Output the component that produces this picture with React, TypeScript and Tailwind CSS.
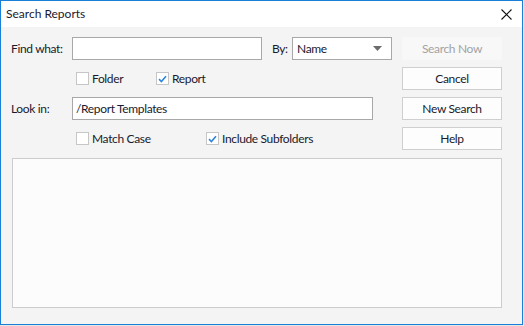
import React from "react";

const font = { fontFamily: 'Lato, "Noto Sans", sans-serif' };

function Checkbox({ checked, label }: { checked?: boolean; label: string }) {
  return (
    <label className="flex items-center gap-[3px]">
      <span className="flex h-[13px] w-[13px] items-center justify-center border border-[#c6c6c6] bg-white">
        {checked && (
          <svg width="9" height="8" viewBox="0 0 9 8">
            <path d="M1 4.2 L3.4 6.5 L8 1.2" fill="none" stroke="#2f86dd" strokeWidth="1.6" />
          </svg>
        )}
      </span>
      <span>{label}</span>
    </label>
  );
}

function Button({ children, disabled }: { children: React.ReactNode; disabled?: boolean }) {
  return (
    <button
      className={`h-[23px] w-[100px] border text-[12px] ${
        disabled
          ? "border-[#f7f7f7] bg-[#f8f8f8] text-[#a3a3a3]"
          : "border-[#cfcfcf] bg-[#fdfdfd] text-[#1a1a2a]"
      }`}
    >
      {children}
    </button>
  );
}

export default function App() {
  return (
    <div className="h-[326px] w-[524px] bg-[#e6e6e6]" style={font}>
      <div className="flex h-[325px] w-[523px] flex-col border border-[#1a7fd6] bg-[#f3f4f3] text-[12px] leading-none tracking-[-0.35px] text-[#1a1a2e]">
        {/* Title bar */}
        <div className="flex h-[26px] shrink-0 items-center justify-between bg-white pl-[5px] pr-[10px]">
          <span className="text-[12px] tracking-normal">Search Reports</span>
          <svg width="11" height="11" viewBox="0 0 11 11">
            <path d="M0.5 0.5 L10.5 10.5 M10.5 0.5 L0.5 10.5" stroke="#111" strokeWidth="1.1" />
          </svg>
        </div>

        {/* Body */}
        <div className="flex pl-[10px] pt-[10px]">
          <div className="grid w-[381px] grid-rows-[23px_23px_23px_23px] gap-y-[7px]">
            <div className="flex items-center">
              <span className="w-[61px]">Find what:</span>
              <div className="h-[23px] w-[190px] border border-[#a8a8a8] bg-white" />
              <span className="ml-[10px] w-[20px]">By:</span>
              <div className="flex h-[23px] w-[100px] items-center justify-between border border-[#a8a8a8] bg-white pl-[4px] pr-[9px]">
                <span>Name</span>
                <svg width="9" height="5" viewBox="0 0 9 5">
                  <path d="M0 0 L9 0 L4.5 5 Z" fill="#6b6b6b" />
                </svg>
              </div>
            </div>
            <div className="flex items-center pl-[65px]">
              <div className="w-[80px]">
                <Checkbox label="Folder" />
              </div>
              <Checkbox checked label="Report" />
            </div>
            <div className="flex items-center">
              <span className="w-[61px]">Look in:</span>
              <div className="flex h-[23px] w-[301px] items-center border border-[#a8a8a8] bg-white pl-[3px]">
                /Report Templates
              </div>
            </div>
            <div className="flex items-center pl-[65px]">
              <div className="w-[130px]">
                <Checkbox label="Match Case" />
              </div>
              <Checkbox checked label="Include Subfolders" />
            </div>
          </div>
          <div className="ml-[10px] flex flex-col gap-[7px]">
            <Button disabled>Search Now</Button>
            <Button>Cancel</Button>
            <Button>New Search</Button>
            <Button>Help</Button>
          </div>
        </div>

        {/* Results */}
        <div className="ml-[11px] mt-[8px] h-[150px] w-[490px] border border-[#cccccc] bg-[#fbfcfb]" />
      </div>
    </div>
  );
}
